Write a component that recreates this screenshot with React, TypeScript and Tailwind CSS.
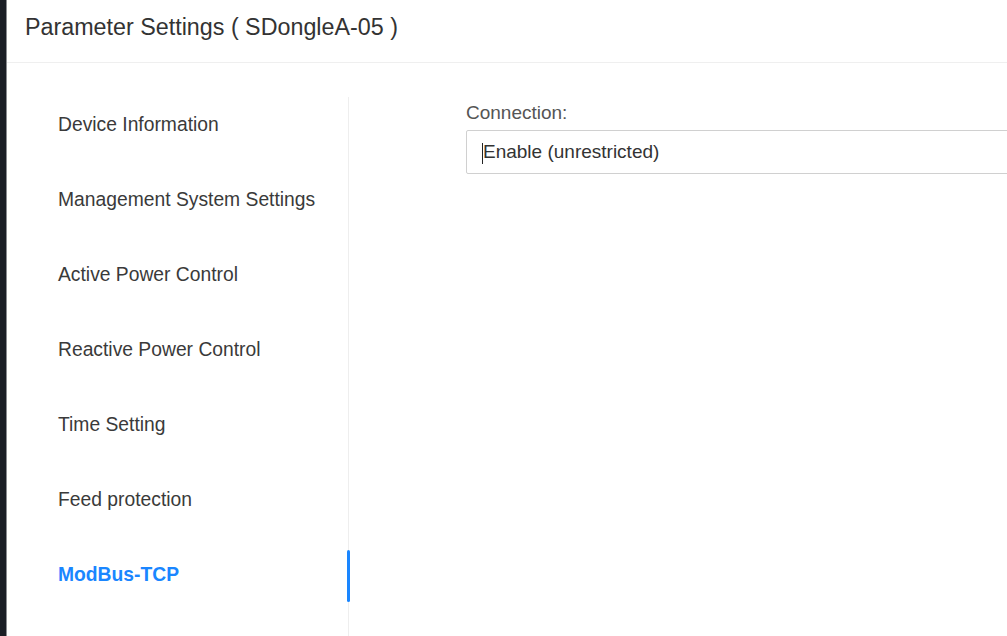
import React from "react";

const items = [
  "Device Information",
  "Management System Settings",
  "Active Power Control",
  "Reactive Power Control",
  "Time Setting",
  "Feed protection",
  "ModBus-TCP",
];

export default function App() {
  return (
    <div
      className="flex h-[636px] w-[1007px] overflow-hidden bg-white"
      style={{ fontFamily: '"Liberation Sans", Arial, sans-serif' }}
    >
      <div className="h-full w-[6px] shrink-0 bg-[#1b1e25]" />
      <div className="h-full w-px shrink-0 bg-[#8a8c90]" />
      <div className="flex min-w-0 flex-1 flex-col">
        <div className="h-[63px] shrink-0 border-b border-[#efefef] pl-[18px] pt-[10px] text-[23.3px] text-[#333]">
          Parameter Settings ( SDongleA-05 )
        </div>
        <div className="flex min-h-0 flex-1 pt-[34px]">
          <div className="flex w-[342px] shrink-0 flex-col gap-[23px] border-r border-[#eeeeee] pt-[2px]">
            {items.map((t, i) => {
              const active = i === items.length - 1;
              return (
                <div
                  key={t}
                  className={`relative flex h-[52px] items-center pl-[51px] text-[19.3px] ${
                    active ? "font-bold text-[#1a86ff]" : "text-[#3a3a3a]"
                  }`}
                >
                  {t}
                  {active && (
                    <div className="absolute right-[-2px] top-[1px] h-[52px] w-[3px] rounded-sm bg-[#1a86ff]" />
                  )}
                </div>
              );
            })}
          </div>
          <div className="min-w-0 flex-1 pl-[117px] pt-[2px]">
            <div className="text-[19px] text-[#555]">Connection:</div>
            <div className="relative mt-[2px] flex h-[44px] w-[700px] items-center rounded-[2px] border border-[#d0d0d0] pl-[16px] pt-[2px] text-[19px] text-[#333]">
              <span className="absolute left-[15px] top-[12px] h-[21px] w-px bg-[#222]" />
              Enable (unrestricted)
            </div>
          </div>
        </div>
      </div>
    </div>
  );
}
